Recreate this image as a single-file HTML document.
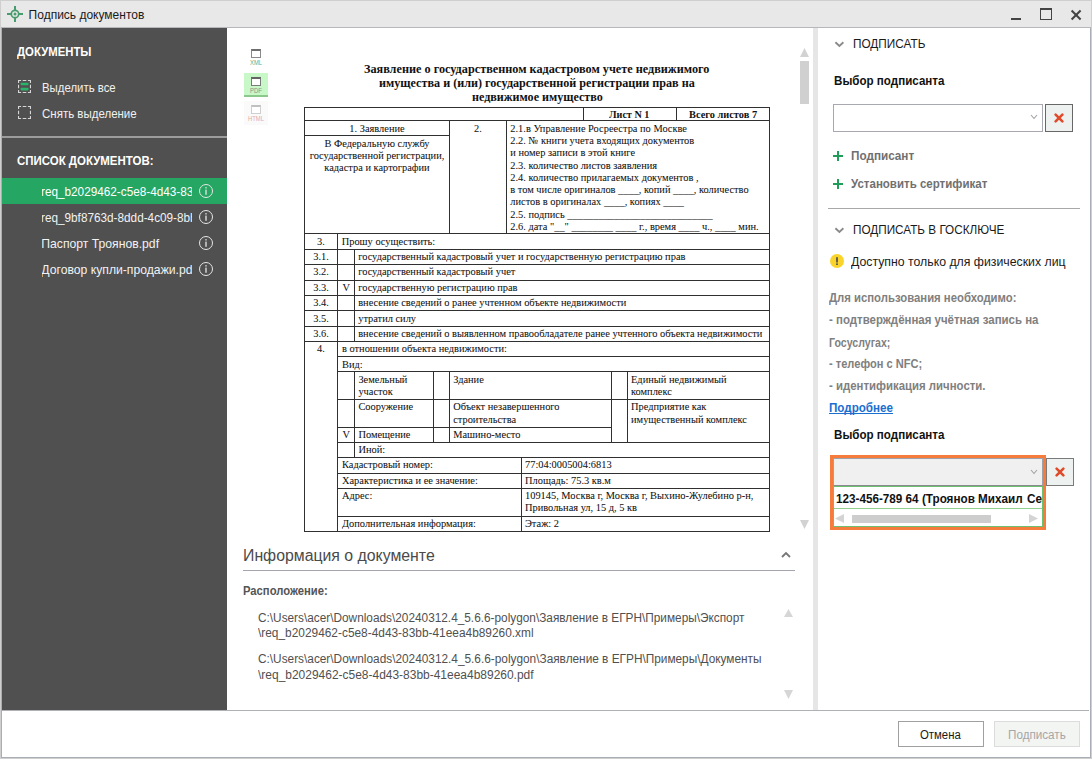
<!DOCTYPE html><html><head><meta charset="utf-8"><style>
html,body{margin:0;padding:0;}
body{width:1092px;height:759px;position:relative;overflow:hidden;background:#fff;font-family:"Liberation Sans",sans-serif;}
div,span{box-sizing:border-box;}
</style></head><body>
<div style="position:absolute;left:0px;top:0px;width:1092px;height:759px;background:#cfcfcf;"></div>
<div style="position:absolute;left:1px;top:1px;width:1090px;height:757px;background:#a9adb5;"></div>
<div style="position:absolute;left:2px;top:28px;width:1088px;height:729px;background:#fff;"></div>
<div style="position:absolute;left:1px;top:1px;width:1090px;height:26px;background:#e8e8e8;"></div>
<div style="position:absolute;left:1px;top:27px;width:1090px;height:1px;background:#b5b7bc;"></div>
<svg style="position:absolute;left:6px;top:5px" width="18" height="18" viewBox="0 0 18 18">
<g fill="none" stroke="#479b6d" stroke-width="1.7"><circle cx="9" cy="9" r="3.7"/>
<line x1="1" y1="9" x2="5.3" y2="9" stroke-width="2"/><line x1="12.7" y1="9" x2="17" y2="9" stroke-width="2"/>
<line x1="9" y1="1" x2="9" y2="5.3" stroke-width="2"/><line x1="9" y1="12.7" x2="9" y2="17" stroke-width="2"/></g>
<circle cx="9" cy="9" r="1.5" fill="#479b6d"/></svg>
<span id="t1" style="position:absolute;left:28.60px;top:9px;white-space:nowrap;font-family:'Liberation Sans',sans-serif;font-size:12px;line-height:12px;font-weight:400;color:#1a1a1a;">Подпись документов</span>
<div style="position:absolute;left:1011px;top:18px;width:10px;height:2px;background:#444;"></div>
<div style="position:absolute;left:1040px;top:8px;width:12px;height:12px;border:1px solid #444;border-top-width:2px;"></div>
<svg style="position:absolute;left:1070px;top:9px" width="12" height="12" viewBox="0 0 12 12">
<g stroke="#444" stroke-width="2.1"><line x1="1.6" y1="1.6" x2="10.6" y2="10.6"/><line x1="10.6" y1="1.6" x2="1.6" y2="10.6"/></g></svg>
<div style="position:absolute;left:2px;top:28px;width:225px;height:682px;background:#505050;"></div>
<span id="t2" style="position:absolute;left:16.80px;top:46px;white-space:nowrap;font-family:'Liberation Sans',sans-serif;font-size:12.5px;line-height:12.5px;font-weight:700;color:#fff;transform:scaleX(0.9085);transform-origin:0 0;">ДОКУМЕНТЫ</span>
<svg style="position:absolute;left:18px;top:80px" width="13" height="13" viewBox="0 0 13 13"><path d="M0.55,3.1V0.55H3.1M4.7,0.55H8.3M9.9,0.55H12.45V3.1M12.45,4.7V8.3M12.45,9.9V12.45H9.9M8.3,12.45H4.7M3.1,12.45H0.55V9.9M0.55,8.3V4.7" fill="none" stroke="#d6d6d6" stroke-width="1.1"/>
<rect x="2.6" y="2.8" width="7.9" height="2.5" rx="0.8" fill="#28b56a"/><rect x="2.6" y="7.8" width="7.9" height="2.6" rx="0.8" fill="#28b56a"/></svg>
<span id="t3" style="position:absolute;left:41.80px;top:82px;white-space:nowrap;font-family:'Liberation Sans',sans-serif;font-size:12px;line-height:12px;font-weight:400;color:#f0f0f0;transform:scaleX(0.9496);transform-origin:0 0;">Выделить все</span>
<svg style="position:absolute;left:18px;top:106px" width="13" height="13" viewBox="0 0 13 13"><path d="M0.55,3.1V0.55H3.1M4.7,0.55H8.3M9.9,0.55H12.45V3.1M12.45,4.7V8.3M12.45,9.9V12.45H9.9M8.3,12.45H4.7M3.1,12.45H0.55V9.9M0.55,8.3V4.7" fill="none" stroke="#d6d6d6" stroke-width="1.1"/></svg>
<span id="t4" style="position:absolute;left:41.80px;top:108px;white-space:nowrap;font-family:'Liberation Sans',sans-serif;font-size:12px;line-height:12px;font-weight:400;color:#f0f0f0;transform:scaleX(0.9581);transform-origin:0 0;">Снять выделение</span>
<div style="position:absolute;left:2px;top:136px;width:225px;height:2px;background:#9c9c9c;"></div>
<span id="t5" style="position:absolute;left:16.80px;top:155px;white-space:nowrap;font-family:'Liberation Sans',sans-serif;font-size:12.5px;line-height:12.5px;font-weight:700;color:#fff;transform:scaleX(0.9167);transform-origin:0 0;">СПИСОК ДОКУМЕНТОВ:</span>
<div style="position:absolute;left:2px;top:178px;width:225px;height:26px;background:#25a662;"></div>
<div style="position:absolute;left:42px;top:178px;width:150px;height:26px;overflow:hidden;">
<span id="t6" style="position:absolute;left:-0.70px;top:8px;white-space:nowrap;font-family:'Liberation Sans',sans-serif;font-size:12.2px;line-height:12.2px;font-weight:400;color:#fff;transform:scaleX(0.9650);transform-origin:0 0;">req_b2029462-c5e8-4d43-83bb-41eea4b89260.xml</span>
</div>
<svg style="position:absolute;left:198px;top:183px" width="16" height="16" viewBox="0 0 16 16">
<circle cx="8" cy="8" r="6.5" fill="none" stroke="#e6e6e6" stroke-width="1"/>
<rect x="7.35" y="6.6" width="1.3" height="5.2" fill="#e6e6e6"/><rect x="7.35" y="4.1" width="1.3" height="1.4" fill="#e6e6e6"/></svg>
<div style="position:absolute;left:42px;top:204px;width:150px;height:26px;overflow:hidden;">
<span id="t7" style="position:absolute;left:-0.70px;top:8px;white-space:nowrap;font-family:'Liberation Sans',sans-serif;font-size:12.2px;line-height:12.2px;font-weight:400;color:#f2f2f2;transform:scaleX(0.9650);transform-origin:0 0;">req_9bf8763d-8ddd-4c09-8bb1-1234567890ab.xml</span>
</div>
<svg style="position:absolute;left:198px;top:209px" width="16" height="16" viewBox="0 0 16 16">
<circle cx="8" cy="8" r="6.5" fill="none" stroke="#e6e6e6" stroke-width="1"/>
<rect x="7.35" y="6.6" width="1.3" height="5.2" fill="#e6e6e6"/><rect x="7.35" y="4.1" width="1.3" height="1.4" fill="#e6e6e6"/></svg>
<div style="position:absolute;left:42px;top:230px;width:150px;height:26px;overflow:hidden;">
<span id="t8" style="position:absolute;left:-0.70px;top:8px;white-space:nowrap;font-family:'Liberation Sans',sans-serif;font-size:12.2px;line-height:12.2px;font-weight:400;color:#f2f2f2;">Паспорт Троянов.pdf</span>
</div>
<svg style="position:absolute;left:198px;top:235px" width="16" height="16" viewBox="0 0 16 16">
<circle cx="8" cy="8" r="6.5" fill="none" stroke="#e6e6e6" stroke-width="1"/>
<rect x="7.35" y="6.6" width="1.3" height="5.2" fill="#e6e6e6"/><rect x="7.35" y="4.1" width="1.3" height="1.4" fill="#e6e6e6"/></svg>
<div style="position:absolute;left:42px;top:256px;width:150px;height:26px;overflow:hidden;">
<span id="t9" style="position:absolute;left:-0.70px;top:8px;white-space:nowrap;font-family:'Liberation Sans',sans-serif;font-size:12.2px;line-height:12.2px;font-weight:400;color:#f2f2f2;">Договор купли-продажи.pdf</span>
</div>
<svg style="position:absolute;left:198px;top:261px" width="16" height="16" viewBox="0 0 16 16">
<circle cx="8" cy="8" r="6.5" fill="none" stroke="#e6e6e6" stroke-width="1"/>
<rect x="7.35" y="6.6" width="1.3" height="5.2" fill="#e6e6e6"/><rect x="7.35" y="4.1" width="1.3" height="1.4" fill="#e6e6e6"/></svg>
<div style="position:absolute;left:813px;top:28px;width:5px;height:682px;background:#e6e6e6;"></div>
<div style="position:absolute;left:244px;top:73px;width:24px;height:24px;background:#c8f7c8;border-bottom:2px solid #8cc88c;"></div>
<div style="position:absolute;left:244px;top:101px;width:24px;height:24px;background:#fafafa;"></div>
<div style="position:absolute;left:251px;top:49px;width:10px;height:9px;border:1px solid #8a8a8a;border-top:2px solid #6e6e6e;background:#fff;"></div>
<div style="position:absolute;left:251px;top:77px;width:10px;height:9px;border:1px solid #7a7a7a;border-top:2px solid #646464;background:#fff;"></div>
<div style="position:absolute;left:251px;top:105px;width:10px;height:9px;border:1px solid #cfcfcf;border-top:2px solid #c0c0c0;background:#fff;"></div>
<span id="t10" style="position:absolute;left:249.50px;top:60px;white-space:nowrap;font-family:'Liberation Sans',sans-serif;font-size:6.5px;line-height:6.5px;font-weight:400;color:#5fae88;transform:scaleX(0.8972);transform-origin:0 0;">XML</span>
<span id="t11" style="position:absolute;left:249.50px;top:88px;white-space:nowrap;font-family:'Liberation Sans',sans-serif;font-size:6.5px;line-height:6.5px;font-weight:400;color:#8a948a;transform:scaleX(0.9231);transform-origin:0 0;">PDF</span>
<span id="t12" style="position:absolute;left:247.50px;top:116px;white-space:nowrap;font-family:'Liberation Sans',sans-serif;font-size:6.5px;line-height:6.5px;font-weight:400;color:#e6aaa2;transform:scaleX(0.9038);transform-origin:0 0;">HTML</span>
<svg style="position:absolute;left:800px;top:48px" width="9" height="9"><polygon points="4.5,0 9,9 0,9" fill="#d2d2d2"/></svg>
<div style="position:absolute;left:800px;top:61px;width:9px;height:43px;background:#d0d0d0;"></div>
<svg style="position:absolute;left:800px;top:520px" width="9" height="9"><polygon points="0,0 9,0 4.5,9" fill="#d2d2d2"/></svg>
<span id="t13" style="position:absolute;left:364.30px;top:64px;white-space:nowrap;font-family:'Liberation Serif',serif;font-size:11.6px;line-height:11.6px;font-weight:700;color:#111;transform:scaleX(1.0546);transform-origin:0 0;">Заявление о государственном кадастровом учете недвижимого</span>
<span id="t14" style="position:absolute;left:379.30px;top:78px;white-space:nowrap;font-family:'Liberation Serif',serif;font-size:11.6px;line-height:11.6px;font-weight:700;color:#111;transform:scaleX(1.0471);transform-origin:0 0;">имущества и (или) государственной регистрации прав на</span>
<span id="t15" style="position:absolute;left:471.80px;top:92px;white-space:nowrap;font-family:'Liberation Serif',serif;font-size:11.6px;line-height:11.6px;font-weight:700;color:#111;transform:scaleX(1.0429);transform-origin:0 0;">недвижимое имущество</span>
<div style="position:absolute;left:304px;top:107px;width:466px;height:1px;background:#303030;"></div>
<div style="position:absolute;left:304px;top:107px;width:1px;height:425px;background:#303030;"></div>
<div style="position:absolute;left:769px;top:107px;width:1px;height:425px;background:#303030;"></div>
<div style="position:absolute;left:583px;top:107px;width:1px;height:14px;background:#303030;"></div>
<div style="position:absolute;left:676px;top:107px;width:1px;height:14px;background:#303030;"></div>
<div style="position:absolute;left:304px;top:120px;width:466px;height:1px;background:#303030;"></div>
<span id="t16" style="position:absolute;left:609.20px;top:110px;white-space:nowrap;font-family:'Liberation Serif',serif;font-size:10px;line-height:10px;font-weight:700;color:#111;transform:scaleX(1.0126);transform-origin:0 0;">Лист N 1</span>
<span id="t17" style="position:absolute;left:688.90px;top:110px;white-space:nowrap;font-family:'Liberation Serif',serif;font-size:10px;line-height:10px;font-weight:700;color:#111;transform:scaleX(1.0365);transform-origin:0 0;">Всего листов 7</span>
<div style="position:absolute;left:449px;top:120px;width:1px;height:114px;background:#303030;"></div>
<div style="position:absolute;left:506px;top:120px;width:1px;height:114px;background:#303030;"></div>
<div style="position:absolute;left:304px;top:135px;width:146px;height:1px;background:#303030;"></div>
<span id="t18" style="position:absolute;left:349.35px;top:124px;white-space:nowrap;font-family:'Liberation Serif',serif;font-size:10.4px;line-height:10.4px;font-weight:400;color:#111;-webkit-text-stroke:0.05px #111;">1. Заявление</span>
<span id="t19" style="position:absolute;left:324.48px;top:139px;white-space:nowrap;font-family:'Liberation Serif',serif;font-size:10.4px;line-height:10.4px;font-weight:400;color:#111;-webkit-text-stroke:0.05px #111;">В Федеральную службу</span>
<span id="t20" style="position:absolute;left:309.67px;top:151px;white-space:nowrap;font-family:'Liberation Serif',serif;font-size:10.4px;line-height:10.4px;font-weight:400;color:#111;-webkit-text-stroke:0.05px #111;">государственной регистрации,</span>
<span id="t21" style="position:absolute;left:324.34px;top:163px;white-space:nowrap;font-family:'Liberation Serif',serif;font-size:10.4px;line-height:10.4px;font-weight:400;color:#111;-webkit-text-stroke:0.05px #111;">кадастра и картографии</span>
<span id="t22" style="position:absolute;left:474.00px;top:124px;white-space:nowrap;font-family:'Liberation Serif',serif;font-size:10.4px;line-height:10.4px;font-weight:400;color:#111;-webkit-text-stroke:0.05px #111;">2.</span>
<span id="t23" style="position:absolute;left:510.30px;top:124px;white-space:nowrap;font-family:'Liberation Serif',serif;font-size:10.4px;line-height:10.4px;font-weight:400;color:#111;-webkit-text-stroke:0.05px #111;">2.1.в Управление Росреестра по Москве</span>
<span id="t24" style="position:absolute;left:510.30px;top:136px;white-space:nowrap;font-family:'Liberation Serif',serif;font-size:10.4px;line-height:10.4px;font-weight:400;color:#111;-webkit-text-stroke:0.05px #111;">2.2. № книги учета входящих документов</span>
<span id="t25" style="position:absolute;left:510.30px;top:148px;white-space:nowrap;font-family:'Liberation Serif',serif;font-size:10.4px;line-height:10.4px;font-weight:400;color:#111;-webkit-text-stroke:0.05px #111;">и номер записи в этой книге</span>
<span id="t26" style="position:absolute;left:510.30px;top:161px;white-space:nowrap;font-family:'Liberation Serif',serif;font-size:10.4px;line-height:10.4px;font-weight:400;color:#111;-webkit-text-stroke:0.05px #111;">2.3. количество листов заявления</span>
<span id="t27" style="position:absolute;left:510.30px;top:173px;white-space:nowrap;font-family:'Liberation Serif',serif;font-size:10.4px;line-height:10.4px;font-weight:400;color:#111;-webkit-text-stroke:0.05px #111;">2.4. количество прилагаемых документов ,</span>
<span id="t28" style="position:absolute;left:510.30px;top:185px;white-space:nowrap;font-family:'Liberation Serif',serif;font-size:10.4px;line-height:10.4px;font-weight:400;color:#111;-webkit-text-stroke:0.05px #111;">в том числе оригиналов ____, копий ____, количество</span>
<span id="t29" style="position:absolute;left:510.30px;top:197px;white-space:nowrap;font-family:'Liberation Serif',serif;font-size:10.4px;line-height:10.4px;font-weight:400;color:#111;-webkit-text-stroke:0.05px #111;">листов в оригиналах ____, копиях ____</span>
<span id="t30" style="position:absolute;left:510.30px;top:210px;white-space:nowrap;font-family:'Liberation Serif',serif;font-size:10.4px;line-height:10.4px;font-weight:400;color:#111;-webkit-text-stroke:0.05px #111;">2.5. подпись ____________________________</span>
<span id="t31" style="position:absolute;left:510.30px;top:222px;white-space:nowrap;font-family:'Liberation Serif',serif;font-size:10.4px;line-height:10.4px;font-weight:400;color:#111;-webkit-text-stroke:0.05px #111;">2.6. дата "__" ________ ____ г., время ____ ч., ____ мин.</span>
<div style="position:absolute;left:304px;top:233px;width:466px;height:1px;background:#303030;"></div>
<div style="position:absolute;left:337px;top:233px;width:1px;height:299px;background:#303030;"></div>
<span id="t32" style="position:absolute;left:317.10px;top:237px;white-space:nowrap;font-family:'Liberation Serif',serif;font-size:10.4px;line-height:10.4px;font-weight:400;color:#111;-webkit-text-stroke:0.05px #111;">3.</span>
<span id="t33" style="position:absolute;left:341.70px;top:237px;white-space:nowrap;font-family:'Liberation Serif',serif;font-size:10.4px;line-height:10.4px;font-weight:400;color:#111;-webkit-text-stroke:0.05px #111;">Прошу осуществить:</span>
<div style="position:absolute;left:304px;top:249px;width:466px;height:1px;background:#303030;"></div>
<div style="position:absolute;left:354px;top:249px;width:1px;height:93px;background:#303030;"></div>
<span id="t34" style="position:absolute;left:313.20px;top:252px;white-space:nowrap;font-family:'Liberation Serif',serif;font-size:10.4px;line-height:10.4px;font-weight:400;color:#111;-webkit-text-stroke:0.05px #111;">3.1.</span>
<span id="t35" style="position:absolute;left:358.20px;top:252px;white-space:nowrap;font-family:'Liberation Serif',serif;font-size:10.4px;line-height:10.4px;font-weight:400;color:#111;-webkit-text-stroke:0.05px #111;">государственный кадастровый учет и государственную регистрацию прав</span>
<div style="position:absolute;left:304px;top:264px;width:466px;height:1px;background:#303030;"></div>
<span id="t36" style="position:absolute;left:313.20px;top:267px;white-space:nowrap;font-family:'Liberation Serif',serif;font-size:10.4px;line-height:10.4px;font-weight:400;color:#111;-webkit-text-stroke:0.05px #111;">3.2.</span>
<span id="t37" style="position:absolute;left:358.20px;top:267px;white-space:nowrap;font-family:'Liberation Serif',serif;font-size:10.4px;line-height:10.4px;font-weight:400;color:#111;-webkit-text-stroke:0.05px #111;">государственный кадастровый учет</span>
<div style="position:absolute;left:304px;top:280px;width:466px;height:1px;background:#303030;"></div>
<span id="t38" style="position:absolute;left:313.20px;top:283px;white-space:nowrap;font-family:'Liberation Serif',serif;font-size:10.4px;line-height:10.4px;font-weight:400;color:#111;-webkit-text-stroke:0.05px #111;">3.3.</span>
<span id="t39" style="position:absolute;left:358.20px;top:283px;white-space:nowrap;font-family:'Liberation Serif',serif;font-size:10.4px;line-height:10.4px;font-weight:400;color:#111;-webkit-text-stroke:0.05px #111;">государственную регистрацию прав</span>
<div style="position:absolute;left:304px;top:295px;width:466px;height:1px;background:#303030;"></div>
<span id="t40" style="position:absolute;left:313.20px;top:298px;white-space:nowrap;font-family:'Liberation Serif',serif;font-size:10.4px;line-height:10.4px;font-weight:400;color:#111;-webkit-text-stroke:0.05px #111;">3.4.</span>
<span id="t41" style="position:absolute;left:358.20px;top:298px;white-space:nowrap;font-family:'Liberation Serif',serif;font-size:10.4px;line-height:10.4px;font-weight:400;color:#111;-webkit-text-stroke:0.05px #111;">внесение сведений о ранее учтенном объекте недвижимости</span>
<div style="position:absolute;left:304px;top:310px;width:466px;height:1px;background:#303030;"></div>
<span id="t42" style="position:absolute;left:313.20px;top:314px;white-space:nowrap;font-family:'Liberation Serif',serif;font-size:10.4px;line-height:10.4px;font-weight:400;color:#111;-webkit-text-stroke:0.05px #111;">3.5.</span>
<span id="t43" style="position:absolute;left:358.20px;top:314px;white-space:nowrap;font-family:'Liberation Serif',serif;font-size:10.4px;line-height:10.4px;font-weight:400;color:#111;-webkit-text-stroke:0.05px #111;">утратил силу</span>
<div style="position:absolute;left:304px;top:326px;width:466px;height:1px;background:#303030;"></div>
<span id="t44" style="position:absolute;left:313.20px;top:329px;white-space:nowrap;font-family:'Liberation Serif',serif;font-size:10.4px;line-height:10.4px;font-weight:400;color:#111;-webkit-text-stroke:0.05px #111;">3.6.</span>
<span id="t45" style="position:absolute;left:358.20px;top:329px;white-space:nowrap;font-family:'Liberation Serif',serif;font-size:10.4px;line-height:10.4px;font-weight:400;color:#111;-webkit-text-stroke:0.05px #111;">внесение сведений о выявленном правообладателе ранее учтенного объекта недвижимости</span>
<div style="position:absolute;left:304px;top:341px;width:466px;height:1px;background:#303030;"></div>
<span id="t46" style="position:absolute;left:342.44px;top:283px;white-space:nowrap;font-family:'Liberation Serif',serif;font-size:10.4px;line-height:10.4px;font-weight:400;color:#111;-webkit-text-stroke:0.05px #111;">V</span>
<span id="t47" style="position:absolute;left:317.10px;top:344px;white-space:nowrap;font-family:'Liberation Serif',serif;font-size:10.4px;line-height:10.4px;font-weight:400;color:#111;-webkit-text-stroke:0.05px #111;">4.</span>
<span id="t48" style="position:absolute;left:342.00px;top:344px;white-space:nowrap;font-family:'Liberation Serif',serif;font-size:10.4px;line-height:10.4px;font-weight:400;color:#111;-webkit-text-stroke:0.05px #111;">в отношении объекта недвижимости:</span>
<div style="position:absolute;left:337px;top:356px;width:433px;height:1px;background:#303030;"></div>
<span id="t49" style="position:absolute;left:342.00px;top:360px;white-space:nowrap;font-family:'Liberation Serif',serif;font-size:10.4px;line-height:10.4px;font-weight:400;color:#111;-webkit-text-stroke:0.05px #111;">Вид:</span>
<div style="position:absolute;left:337px;top:371px;width:433px;height:1px;background:#303030;"></div>
<div style="position:absolute;left:354px;top:371px;width:1px;height:87px;background:#303030;"></div>
<div style="position:absolute;left:433px;top:371px;width:1px;height:72px;background:#303030;"></div>
<div style="position:absolute;left:449px;top:371px;width:1px;height:72px;background:#303030;"></div>
<div style="position:absolute;left:611px;top:371px;width:1px;height:72px;background:#303030;"></div>
<div style="position:absolute;left:627px;top:371px;width:1px;height:72px;background:#303030;"></div>
<span id="t50" style="position:absolute;left:358.40px;top:375px;white-space:nowrap;font-family:'Liberation Serif',serif;font-size:10.4px;line-height:10.4px;font-weight:400;color:#111;-webkit-text-stroke:0.05px #111;">Земельный</span>
<span id="t51" style="position:absolute;left:358.40px;top:387px;white-space:nowrap;font-family:'Liberation Serif',serif;font-size:10.4px;line-height:10.4px;font-weight:400;color:#111;-webkit-text-stroke:0.05px #111;">участок</span>
<span id="t52" style="position:absolute;left:453.20px;top:375px;white-space:nowrap;font-family:'Liberation Serif',serif;font-size:10.4px;line-height:10.4px;font-weight:400;color:#111;-webkit-text-stroke:0.05px #111;">Здание</span>
<span id="t53" style="position:absolute;left:631.00px;top:375px;white-space:nowrap;font-family:'Liberation Serif',serif;font-size:10.4px;line-height:10.4px;font-weight:400;color:#111;-webkit-text-stroke:0.05px #111;">Единый недвижимый</span>
<span id="t54" style="position:absolute;left:631.00px;top:387px;white-space:nowrap;font-family:'Liberation Serif',serif;font-size:10.4px;line-height:10.4px;font-weight:400;color:#111;-webkit-text-stroke:0.05px #111;">комплекс</span>
<div style="position:absolute;left:337px;top:399px;width:433px;height:1px;background:#303030;"></div>
<span id="t55" style="position:absolute;left:358.40px;top:402px;white-space:nowrap;font-family:'Liberation Serif',serif;font-size:10.4px;line-height:10.4px;font-weight:400;color:#111;-webkit-text-stroke:0.05px #111;">Сооружение</span>
<span id="t56" style="position:absolute;left:453.20px;top:402px;white-space:nowrap;font-family:'Liberation Serif',serif;font-size:10.4px;line-height:10.4px;font-weight:400;color:#111;-webkit-text-stroke:0.05px #111;">Объект незавершенного</span>
<span id="t57" style="position:absolute;left:453.20px;top:415px;white-space:nowrap;font-family:'Liberation Serif',serif;font-size:10.4px;line-height:10.4px;font-weight:400;color:#111;-webkit-text-stroke:0.05px #111;">строительства</span>
<span id="t58" style="position:absolute;left:631.00px;top:402px;white-space:nowrap;font-family:'Liberation Serif',serif;font-size:10.4px;line-height:10.4px;font-weight:400;color:#111;-webkit-text-stroke:0.05px #111;">Предприятие как</span>
<span id="t59" style="position:absolute;left:631.00px;top:415px;white-space:nowrap;font-family:'Liberation Serif',serif;font-size:10.4px;line-height:10.4px;font-weight:400;color:#111;-webkit-text-stroke:0.05px #111;">имущественный комплекс</span>
<div style="position:absolute;left:337px;top:427px;width:275px;height:1px;background:#303030;"></div>
<span id="t60" style="position:absolute;left:342.44px;top:430px;white-space:nowrap;font-family:'Liberation Serif',serif;font-size:10.4px;line-height:10.4px;font-weight:400;color:#111;-webkit-text-stroke:0.05px #111;">V</span>
<span id="t61" style="position:absolute;left:358.40px;top:430px;white-space:nowrap;font-family:'Liberation Serif',serif;font-size:10.4px;line-height:10.4px;font-weight:400;color:#111;-webkit-text-stroke:0.05px #111;">Помещение</span>
<span id="t62" style="position:absolute;left:453.20px;top:430px;white-space:nowrap;font-family:'Liberation Serif',serif;font-size:10.4px;line-height:10.4px;font-weight:400;color:#111;-webkit-text-stroke:0.05px #111;">Машино-место</span>
<div style="position:absolute;left:337px;top:442px;width:433px;height:1px;background:#303030;"></div>
<span id="t63" style="position:absolute;left:358.40px;top:445px;white-space:nowrap;font-family:'Liberation Serif',serif;font-size:10.4px;line-height:10.4px;font-weight:400;color:#111;-webkit-text-stroke:0.05px #111;">Иной:</span>
<div style="position:absolute;left:337px;top:457px;width:433px;height:1px;background:#303030;"></div>
<div style="position:absolute;left:521px;top:457px;width:1px;height:75px;background:#303030;"></div>
<span id="t64" style="position:absolute;left:342.00px;top:460px;white-space:nowrap;font-family:'Liberation Serif',serif;font-size:10.4px;line-height:10.4px;font-weight:400;color:#111;-webkit-text-stroke:0.05px #111;">Кадастровый номер:</span>
<span id="t65" style="position:absolute;left:525.00px;top:460px;white-space:nowrap;font-family:'Liberation Serif',serif;font-size:10.4px;line-height:10.4px;font-weight:400;color:#111;-webkit-text-stroke:0.05px #111;">77:04:0005004:6813</span>
<div style="position:absolute;left:337px;top:473px;width:433px;height:1px;background:#303030;"></div>
<span id="t66" style="position:absolute;left:342.00px;top:476px;white-space:nowrap;font-family:'Liberation Serif',serif;font-size:10.4px;line-height:10.4px;font-weight:400;color:#111;-webkit-text-stroke:0.05px #111;">Характеристика и ее значение:</span>
<span id="t67" style="position:absolute;left:525.00px;top:476px;white-space:nowrap;font-family:'Liberation Serif',serif;font-size:10.4px;line-height:10.4px;font-weight:400;color:#111;-webkit-text-stroke:0.05px #111;">Площадь: 75.3 кв.м</span>
<div style="position:absolute;left:337px;top:488px;width:433px;height:1px;background:#303030;"></div>
<span id="t68" style="position:absolute;left:342.00px;top:491px;white-space:nowrap;font-family:'Liberation Serif',serif;font-size:10.4px;line-height:10.4px;font-weight:400;color:#111;-webkit-text-stroke:0.05px #111;">Адрес:</span>
<span id="t69" style="position:absolute;left:525.00px;top:491px;white-space:nowrap;font-family:'Liberation Serif',serif;font-size:10.4px;line-height:10.4px;font-weight:400;color:#111;-webkit-text-stroke:0.05px #111;">109145, Москва г, Москва г, Выхино-Жулебино р-н,</span>
<div style="position:absolute;left:337px;top:516px;width:433px;height:1px;background:#303030;"></div>
<span id="t70" style="position:absolute;left:342.00px;top:519px;white-space:nowrap;font-family:'Liberation Serif',serif;font-size:10.4px;line-height:10.4px;font-weight:400;color:#111;-webkit-text-stroke:0.05px #111;">Дополнительная информация:</span>
<span id="t71" style="position:absolute;left:525.00px;top:519px;white-space:nowrap;font-family:'Liberation Serif',serif;font-size:10.4px;line-height:10.4px;font-weight:400;color:#111;-webkit-text-stroke:0.05px #111;">Этаж: 2</span>
<div style="position:absolute;left:337px;top:531px;width:433px;height:1px;background:#303030;"></div>
<span id="t72" style="position:absolute;left:525.00px;top:503px;white-space:nowrap;font-family:'Liberation Serif',serif;font-size:10.4px;line-height:10.4px;font-weight:400;color:#111;-webkit-text-stroke:0.05px #111;">Привольная ул, 15 д, 5 кв</span>
<div style="position:absolute;left:304px;top:531px;width:466px;height:1px;background:#303030;"></div>
<span id="t73" style="position:absolute;left:242.50px;top:548px;white-space:nowrap;font-family:'Liberation Sans',sans-serif;font-size:16px;line-height:16px;font-weight:400;color:#4a4a4a;transform:scaleX(0.9893);transform-origin:0 0;">Информация о документе</span>
<svg style="position:absolute;left:781px;top:551px" width="10" height="7"><polyline points="1,6 5,2 9,6" fill="none" stroke="#777" stroke-width="1.8"/></svg>
<div style="position:absolute;left:243px;top:570px;width:552px;height:1px;background:#a4a6ae;"></div>
<span id="t74" style="position:absolute;left:242.50px;top:585px;white-space:nowrap;font-family:'Liberation Sans',sans-serif;font-size:12px;line-height:12px;font-weight:700;color:#555555;transform:scaleX(0.9377);transform-origin:0 0;">Расположение:</span>
<span id="t75" style="position:absolute;left:258.00px;top:612px;white-space:nowrap;font-family:'Liberation Sans',sans-serif;font-size:12px;line-height:12px;font-weight:400;color:#505050;transform:scaleX(0.9848);transform-origin:0 0;">C:\Users\acer\Downloads\20240312.4_5.6.6-polygon\Заявление в ЕГРН\Примеры\Экспорт</span>
<span id="t76" style="position:absolute;left:258.00px;top:627px;white-space:nowrap;font-family:'Liberation Sans',sans-serif;font-size:12px;line-height:12px;font-weight:400;color:#505050;transform:scaleX(0.9905);transform-origin:0 0;">\req_b2029462-c5e8-4d43-83bb-41eea4b89260.xml</span>
<span id="t77" style="position:absolute;left:258.00px;top:653px;white-space:nowrap;font-family:'Liberation Sans',sans-serif;font-size:12px;line-height:12px;font-weight:400;color:#505050;transform:scaleX(0.9859);transform-origin:0 0;">C:\Users\acer\Downloads\20240312.4_5.6.6-polygon\Заявление в ЕГРН\Примеры\Документы</span>
<span id="t78" style="position:absolute;left:258.00px;top:669px;white-space:nowrap;font-family:'Liberation Sans',sans-serif;font-size:12px;line-height:12px;font-weight:400;color:#505050;transform:scaleX(0.9976);transform-origin:0 0;">\req_b2029462-c5e8-4d43-83bb-41eea4b89260.pdf</span>
<svg style="position:absolute;left:784px;top:609px" width="9" height="8"><polygon points="4.5,0 9,8 0,8" fill="#d6d6d6"/></svg>
<svg style="position:absolute;left:784px;top:690px" width="9" height="9"><polygon points="0,0 9,0 4.5,9" fill="#d6d6d6"/></svg>
<div style="position:absolute;left:2px;top:710px;width:1087px;height:1px;background:#b0b0b8;"></div>
<div style="position:absolute;left:898px;top:721px;width:86px;height:26px;border:1px solid #a0a0a0;background:#fff;"></div>
<span id="t79" style="position:absolute;left:920.40px;top:729px;white-space:nowrap;font-family:'Liberation Sans',sans-serif;font-size:12px;line-height:12px;font-weight:400;color:#1a1a1a;transform:scaleX(0.9475);transform-origin:0 0;">Отмена</span>
<div style="position:absolute;left:994px;top:721px;width:86px;height:26px;border:1px solid #dcdcdc;background:#f3f5f3;"></div>
<span id="t80" style="position:absolute;left:1008.20px;top:729px;white-space:nowrap;font-family:'Liberation Sans',sans-serif;font-size:12px;line-height:12px;font-weight:400;color:#a6a6a6;transform:scaleX(0.9730);transform-origin:0 0;">Подписать</span>
<svg style="position:absolute;left:834px;top:40.5px" width="10" height="7"><polyline points="1.4,1.3 5.4,4.9 9.4,1.3" fill="none" stroke="#8a8a8a" stroke-width="1.9"/></svg>
<span id="t81" style="position:absolute;left:853.40px;top:38px;white-space:nowrap;font-family:'Liberation Sans',sans-serif;font-size:12px;line-height:12px;font-weight:400;color:#1a1a1a;transform:scaleX(0.9817);transform-origin:0 0;">ПОДПИСАТЬ</span>
<span id="t82" style="position:absolute;left:833.50px;top:75px;white-space:nowrap;font-family:'Liberation Sans',sans-serif;font-size:12.5px;line-height:12.5px;font-weight:700;color:#111;transform:scaleX(0.9282);transform-origin:0 0;">Выбор подписанта</span>
<div style="position:absolute;left:833px;top:104px;width:210px;height:28px;border:1px solid #a8a8b0;background:#fff;"></div>
<svg style="position:absolute;left:1030px;top:114px" width="8" height="6"><polyline points="1,1 4,4.5 7,1" fill="none" stroke="#a0a0a8" stroke-width="1.1"/></svg>
<div style="position:absolute;left:1045px;top:104px;width:28px;height:28px;border:1px solid #676767;background:#edf2f0;"></div>
<svg style="position:absolute;left:1053px;top:112px" width="12" height="12"><g stroke="#e04b2b" stroke-width="2.6" stroke-linecap="round"><line x1="2.6" y1="2.6" x2="9.4" y2="9.4"/><line x1="9.4" y1="2.6" x2="2.6" y2="9.4"/></g></svg>
<div style="position:absolute;left:833px;top:154.5px;width:10px;height:2px;background:#1f9e5a;"></div>
<div style="position:absolute;left:837px;top:150.5px;width:2px;height:10px;background:#1f9e5a;"></div>
<span id="t83" style="position:absolute;left:851.40px;top:150px;white-space:nowrap;font-family:'Liberation Sans',sans-serif;font-size:12.5px;line-height:12.5px;font-weight:700;color:#707070;transform:scaleX(0.9383);transform-origin:0 0;">Подписант</span>
<div style="position:absolute;left:833px;top:182.5px;width:10px;height:2px;background:#1f9e5a;"></div>
<div style="position:absolute;left:837px;top:178.5px;width:2px;height:10px;background:#1f9e5a;"></div>
<span id="t84" style="position:absolute;left:851.40px;top:178px;white-space:nowrap;font-family:'Liberation Sans',sans-serif;font-size:12.5px;line-height:12.5px;font-weight:700;color:#707070;transform:scaleX(0.9210);transform-origin:0 0;">Установить сертификат</span>
<div style="position:absolute;left:828px;top:208px;width:252px;height:1px;background:#a8a8a8;"></div>
<svg style="position:absolute;left:834px;top:226.5px" width="10" height="7"><polyline points="1.4,1.3 5.4,4.9 9.4,1.3" fill="none" stroke="#8a8a8a" stroke-width="1.9"/></svg>
<span id="t85" style="position:absolute;left:852.90px;top:224px;white-space:nowrap;font-family:'Liberation Sans',sans-serif;font-size:12px;line-height:12px;font-weight:400;color:#1a1a1a;transform:scaleX(0.9771);transform-origin:0 0;">ПОДПИСАТЬ В ГОСКЛЮЧЕ</span>
<svg style="position:absolute;left:830px;top:254px" width="14" height="14"><circle cx="7" cy="7" r="7" fill="#fad42a"/>
<rect x="6.1" y="3.2" width="1.8" height="5.3" fill="#555"/><rect x="6.1" y="9.4" width="1.8" height="1.6" fill="#555"/></svg>
<span id="t86" style="position:absolute;left:851.20px;top:256px;white-space:nowrap;font-family:'Liberation Sans',sans-serif;font-size:12.5px;line-height:12.5px;font-weight:400;color:#1a1a1a;transform:scaleX(0.9832);transform-origin:0 0;">Доступно только для физических лиц</span>
<span id="t87" style="position:absolute;left:829.20px;top:292px;white-space:nowrap;font-family:'Liberation Sans',sans-serif;font-size:12px;line-height:12px;font-weight:700;color:#808080;transform:scaleX(0.9439);transform-origin:0 0;">Для использования необходимо:</span>
<span id="t88" style="position:absolute;left:829.20px;top:314px;white-space:nowrap;font-family:'Liberation Sans',sans-serif;font-size:12px;line-height:12px;font-weight:700;color:#808080;transform:scaleX(0.9545);transform-origin:0 0;">- подтверждённая учётная запись на</span>
<span id="t89" style="position:absolute;left:829.20px;top:337px;white-space:nowrap;font-family:'Liberation Sans',sans-serif;font-size:12px;line-height:12px;font-weight:700;color:#808080;transform:scaleX(0.8823);transform-origin:0 0;">Госуслугах;</span>
<span id="t90" style="position:absolute;left:829.20px;top:358px;white-space:nowrap;font-family:'Liberation Sans',sans-serif;font-size:12px;line-height:12px;font-weight:700;color:#808080;transform:scaleX(0.9232);transform-origin:0 0;">- телефон с NFC;</span>
<span id="t91" style="position:absolute;left:829.20px;top:380px;white-space:nowrap;font-family:'Liberation Sans',sans-serif;font-size:12px;line-height:12px;font-weight:700;color:#808080;transform:scaleX(0.9497);transform-origin:0 0;">- идентификация личности.</span>
<span id="t92" style="position:absolute;left:829.20px;top:402px;white-space:nowrap;font-family:'Liberation Sans',sans-serif;font-size:12px;line-height:12px;font-weight:700;color:#1a6fd0;transform:scaleX(0.9683);transform-origin:0 0;text-decoration:underline;text-decoration-skip-ink:none;">Подробнее</span>
<span id="t93" style="position:absolute;left:833.60px;top:429px;white-space:nowrap;font-family:'Liberation Sans',sans-serif;font-size:12.5px;line-height:12.5px;font-weight:700;color:#111;transform:scaleX(0.9282);transform-origin:0 0;">Выбор подписанта</span>
<div style="position:absolute;left:830px;top:455px;width:216px;height:75px;border:3px solid #f57c3a;"></div>
<div style="position:absolute;left:833px;top:458px;width:210px;height:28px;border:1px solid #a0a0a8;border-bottom-color:#8a8a90;background:#f0f0f0;"></div>
<svg style="position:absolute;left:1030px;top:469px" width="8" height="6"><polyline points="1,1 4,4.5 7,1" fill="none" stroke="#a0a0a8" stroke-width="1.1"/></svg>
<div style="position:absolute;left:833px;top:486px;width:210px;height:41px;border:1px solid #6cc070;background:#fff;overflow:hidden;">
<span id="t94" style="position:absolute;left:1.80px;top:6px;white-space:nowrap;font-family:'Liberation Sans',sans-serif;font-size:12.5px;line-height:12.5px;font-weight:700;color:#111;transform:scaleX(0.9361);transform-origin:0 0;">123-456-789 64 (Троянов Михаил</span>
<span id="t95" style="position:absolute;left:192.60px;top:6px;white-space:nowrap;font-family:'Liberation Sans',sans-serif;font-size:12.5px;line-height:12.5px;font-weight:700;color:#111;transform:scaleX(0.9361);transform-origin:0 0;">Сергеевич)</span>
</div>
<div style="position:absolute;left:834px;top:508px;width:208px;height:1px;background:#8fd08f;"></div>
<svg style="position:absolute;left:835px;top:514px" width="9" height="9"><polygon points="0,4.5 9,0 9,9" fill="#d4d4d4"/></svg>
<div style="position:absolute;left:852px;top:515px;width:139px;height:8px;background:#cdcdcd;"></div>
<svg style="position:absolute;left:1029px;top:514px" width="9" height="9"><polygon points="0,0 9,4.5 0,9" fill="#d4d4d4"/></svg>
<div style="position:absolute;left:1046px;top:458px;width:28px;height:28px;border:1px solid #7a7a7a;background:#edf2f0;"></div>
<svg style="position:absolute;left:1054px;top:466px" width="12" height="12"><g stroke="#e04b2b" stroke-width="2.6" stroke-linecap="round"><line x1="2.6" y1="2.6" x2="9.4" y2="9.4"/><line x1="9.4" y1="2.6" x2="2.6" y2="9.4"/></g></svg>
</body></html>
